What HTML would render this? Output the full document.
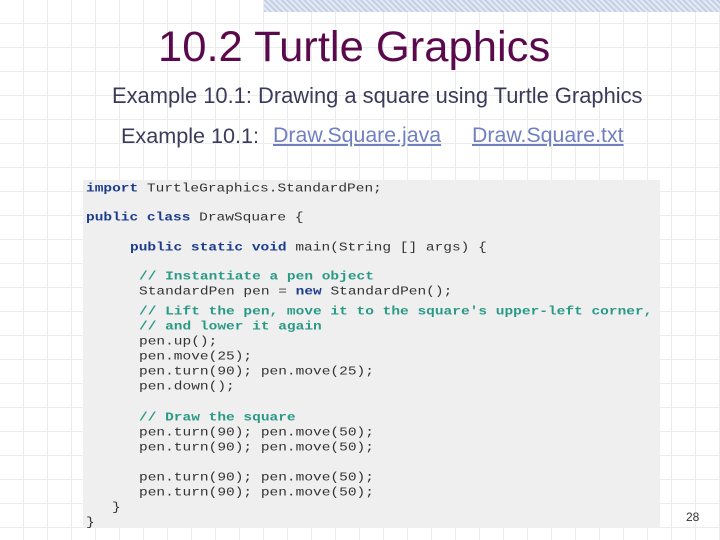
<!DOCTYPE html>
<html><head><style>
body{margin:0;width:720px;height:540px;overflow:hidden;position:relative;font-family:"Liberation Sans",sans-serif;
background-color:#fff;
background-image:repeating-linear-gradient(to right,transparent 0 23px,#ececec 23px 24px),repeating-linear-gradient(to bottom,transparent 0 23px,#ececec 23px 24px);}
.band{position:absolute;left:264px;top:0;width:456px;height:12px;background:#d3dcec;
background-image:repeating-linear-gradient(45deg,#c4d0e6 0 2px,#e4e9f3 2px 4px);}
.t{position:absolute;white-space:nowrap}
.code{position:absolute;left:83px;top:180px;width:577px;height:348px;background:#efefef}
.l{position:absolute;white-space:pre;font-family:"Liberation Mono",monospace;font-size:14.5px;line-height:15px;color:#333;transform:scaleY(0.85);transform-origin:left center}
.k{color:#1c3c8c;font-weight:bold}
.c{color:#2a9a86;font-weight:bold}
a{color:#6f7fc0;text-decoration:underline}
</style></head><body>
<div class="band"></div>
<div class="t" style="left:158px;top:23px;font-size:43px;color:#5a0a4c;transform:scaleX(1.013);transform-origin:left">10.2 Turtle Graphics</div>
<div class="t" style="left:112px;top:83px;font-size:22px;color:#3a3a5a;transform:scaleX(0.995);transform-origin:left">Example 10.1: Drawing a square using Turtle Graphics</div>
<div class="t" style="left:121px;top:123px;font-size:21.6px;color:#3a3a5a">Example 10.1:</div>
<div class="t" style="left:273px;top:123px;font-size:21.3px"><a>Draw.Square.java</a></div>
<div class="t" style="left:472px;top:123px;font-size:21.3px"><a>Draw.Square.txt</a></div>
<div class="code"></div>
<div class="l" style="left:86px;top:182px"><span class="k">import</span> TurtleGraphics.StandardPen;</div>
<div class="l" style="left:86px;top:211px"><span class="k">public class</span> DrawSquare {</div>
<div class="l" style="left:130px;top:241px"><span class="k">public static void</span> main(String [] args) {</div>
<div class="l" style="left:139px;top:270px"><span class="c">// Instantiate a pen object</span></div>
<div class="l" style="left:139px;top:285px">StandardPen pen = <span class="k">new</span> StandardPen();</div>
<div class="l" style="left:139px;top:305px"><span class="c">// Lift the pen, move it to the square's upper-left corner,</span></div>
<div class="l" style="left:139px;top:320px"><span class="c">// and lower it again</span></div>
<div class="l" style="left:139px;top:335px">pen.up();</div>
<div class="l" style="left:139px;top:350px">pen.move(25);</div>
<div class="l" style="left:139px;top:365px">pen.turn(90); pen.move(25);</div>
<div class="l" style="left:139px;top:380px">pen.down();</div>
<div class="l" style="left:139px;top:411px"><span class="c">// Draw the square</span></div>
<div class="l" style="left:139px;top:426px">pen.turn(90); pen.move(50);</div>
<div class="l" style="left:139px;top:441px">pen.turn(90); pen.move(50);</div>
<div class="l" style="left:139px;top:471px">pen.turn(90); pen.move(50);</div>
<div class="l" style="left:139px;top:486px">pen.turn(90); pen.move(50);</div>
<div class="l" style="left:112px;top:501px">}</div>
<div class="l" style="left:86px;top:516px">}</div>
<div class="t" style="left:686px;top:510px;font-size:12px;color:#333">28</div>
</body></html>
